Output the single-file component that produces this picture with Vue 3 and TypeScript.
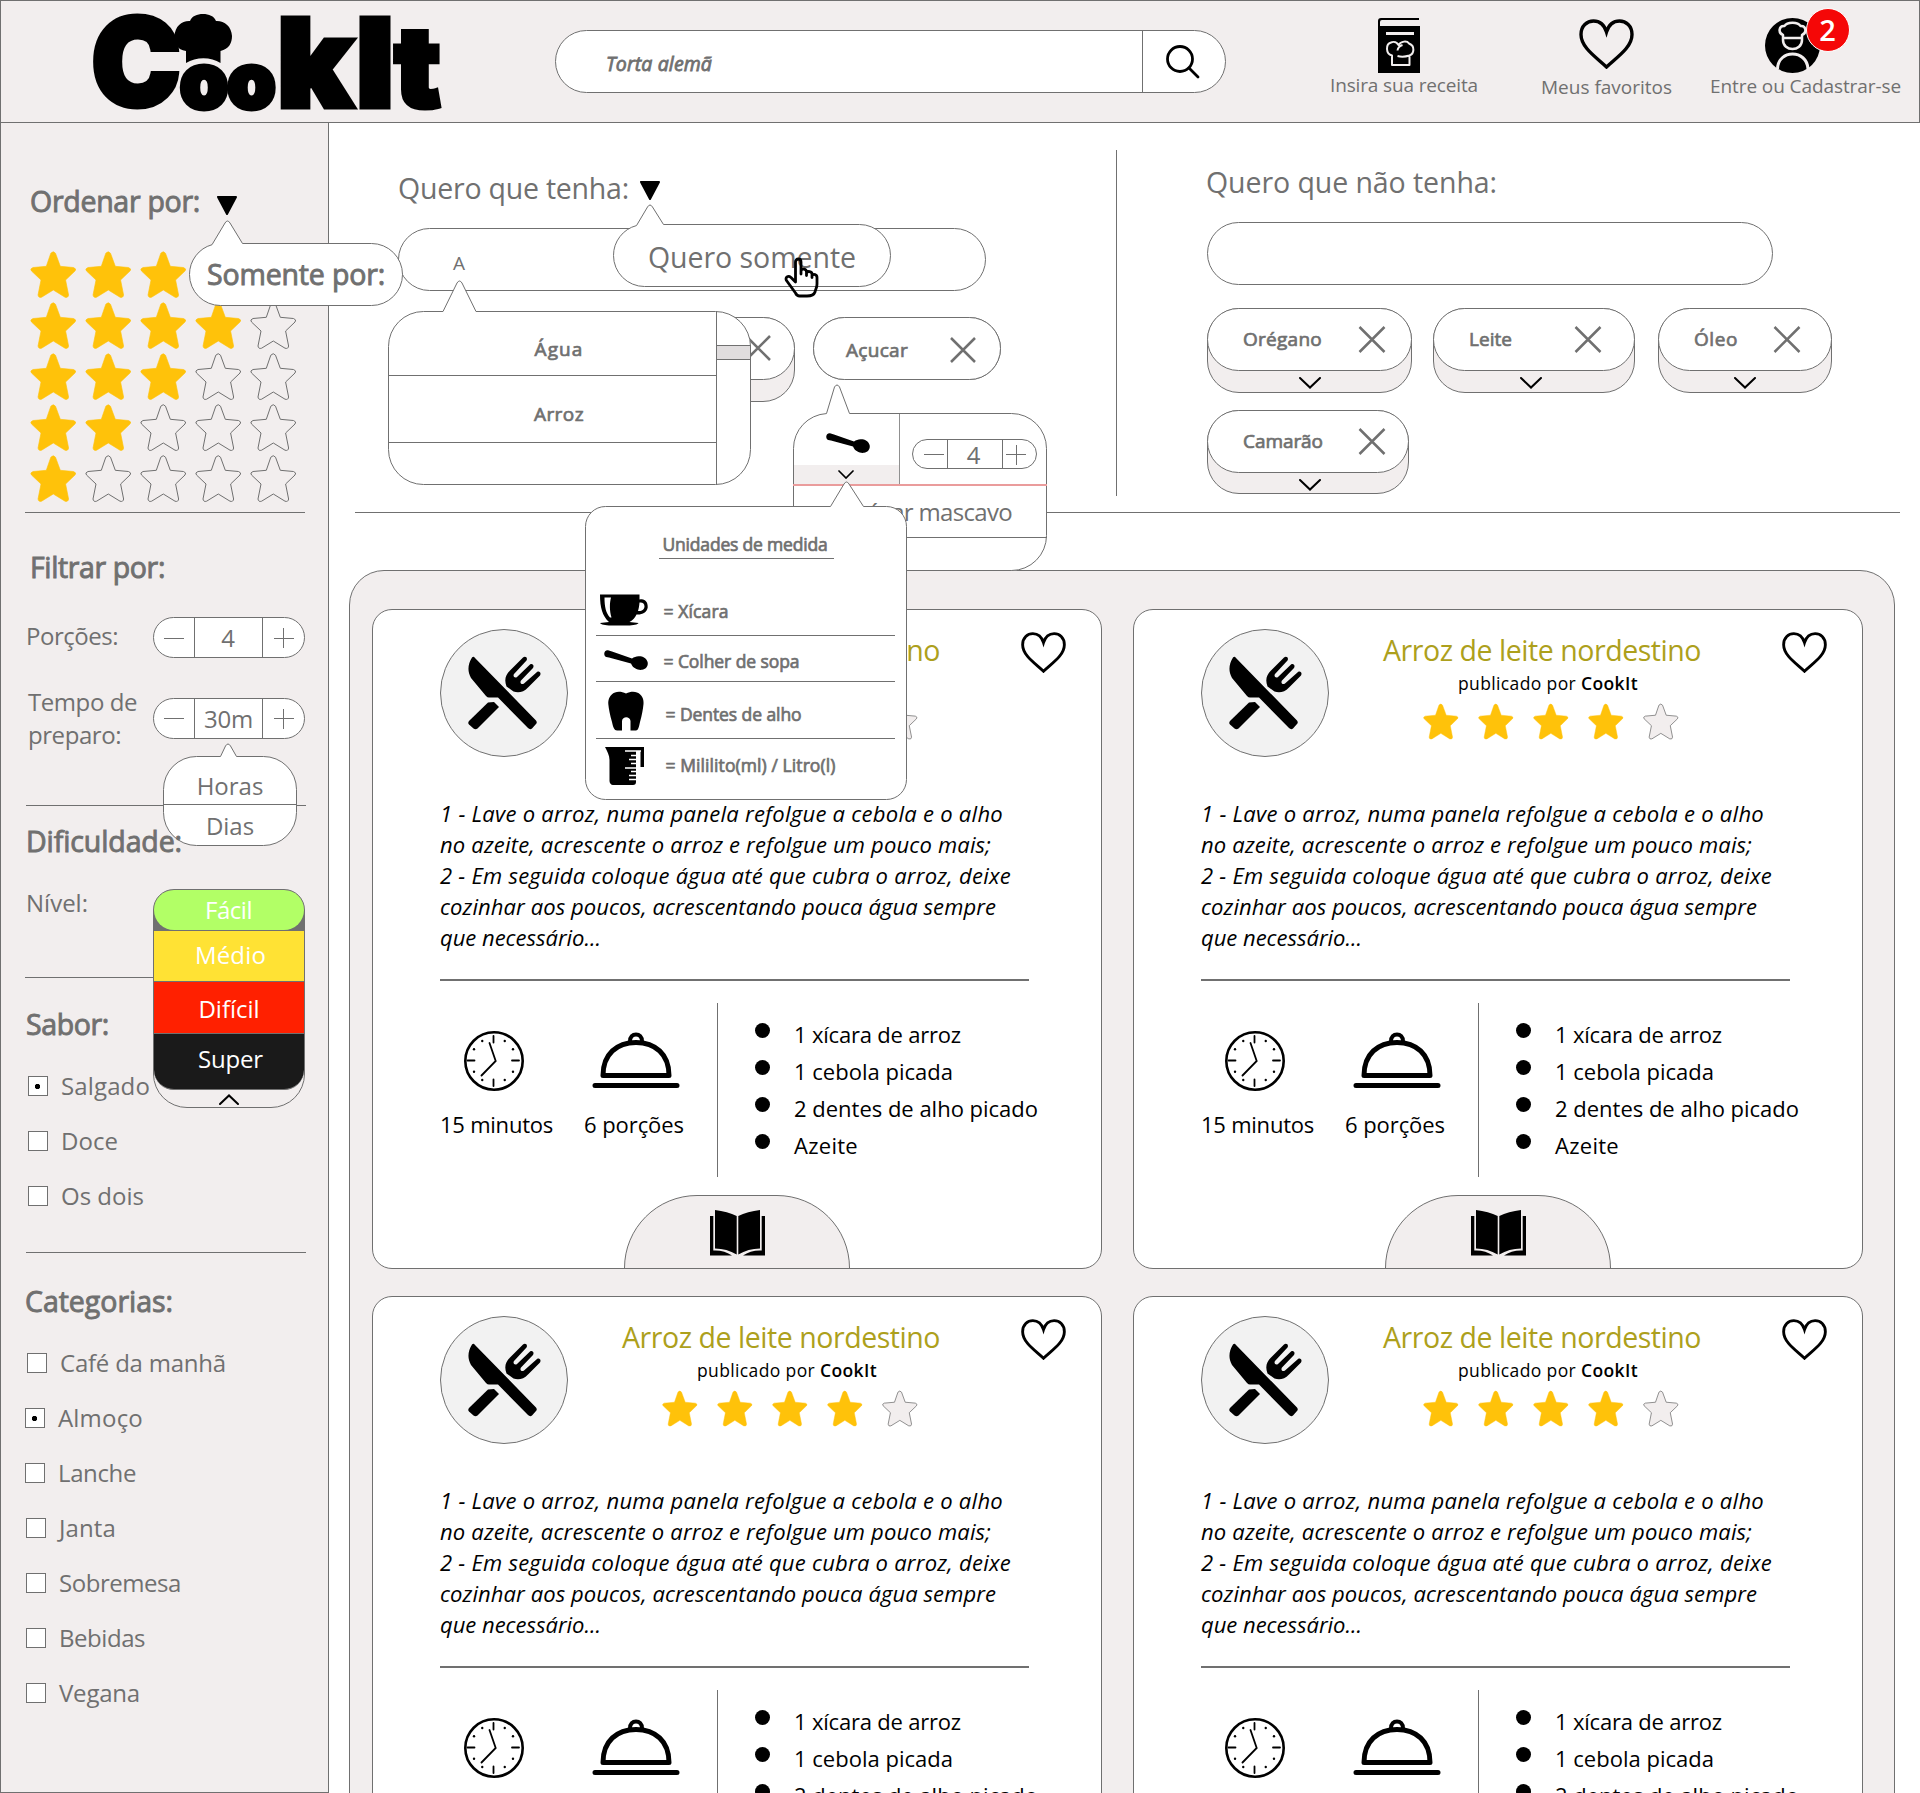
<script setup lang="ts">
interface BubbleSpec { w: number; h: number; r: number; tail: number; tip: number; left: number; right: number }
interface Option { label: string; width: number; checked?: boolean; shift?: number }
interface Chip { label: string; width: number; text: number; height: number; cross: number; chevron: number }

// Tracks a label so that it takes exactly the given width.
const vFit = {
  mounted(el: HTMLElement, binding: { value: number }) {
    const natural = el.getBoundingClientRect().width
    const count = (el.textContent ?? '').trim().length || 1
    el.style.letterSpacing = `${((binding.value - natural) / count).toFixed(3)}px`
  },
}

// Rounded speech bubble with a tail on its top edge.
function bubble(b: BubbleSpec): string {
  const { w, h, r, tail, tip, left, right } = b
  const drop = left < r ? r - Math.sqrt(r * r - (r - left) ** 2) : 0
  const close = left < r ? `A${r} ${r} 0 0 1 ${left} ${tail + drop}` : `A${r} ${r} 0 0 1 ${r} ${tail}H${left}`
  return `M${left} ${tail + drop}L${tip - 2.5} 2.5Q${tip} -1.5 ${tip + 2.5} 2.5L${right} ${tail}H${w - r}` +
    `A${r} ${r} 0 0 1 ${w} ${tail + r}V${tail + h - r}A${r} ${r} 0 0 1 ${w - r} ${tail + h}` +
    `H${r}A${r} ${r} 0 0 1 0 ${tail + h - r}V${tail + r}${close}Z`
}

const shapes = {
  only: bubble({ w: 213, h: 62, r: 31, tail: 23, tip: 38, left: 22.5, right: 53 }),
  time: bubble({ w: 133, h: 89, r: 33, tail: 13, tip: 64.5, left: 57, right: 73 }),
  want: bubble({ w: 277, h: 62, r: 31, tail: 20, tip: 36.5, left: 23, right: 50 }),
  auto: bubble({ w: 362, h: 173, r: 35, tail: 31, tip: 71, left: 54.5, right: 87.5 }),
  unit: bubble({ w: 253, h: 157, r: 35, tail: 29, tip: 43.5, left: 33, right: 56 }),
  measure: bubble({ w: 321, h: 293, r: 20, tail: 25, tip: 261, left: 245, right: 278 }),
}

const starPath = 'M20.8 2.2Q23.3-.8 25.5 2.2L30.3 15.3L43.5 16.5Q47 17.8 45 20L35.6 29L38.6 44Q38.2 47.2 35 46.2L23.3 39L11.6 46.2Q8.4 47.2 8 44L11 29L1.5 20Q-.5 17.8 3 16.5L16.3 15.3Z'
const heartPath = 'M27.5 48C17 38 2 28.500 2 15.500C2 7 8 2 14.500 2C21 2 25.500 6.500 27.500 13C29.500 6.500 34 2 40.500 2C47 2 53 7 53 15.500C53 28.500 38 38 27.500 48Z'
const spoonPath = 'M4 .3C1 0-.5 3 .6 5.500C1.200 7 3 7.200 5 7.600L27 13.500C29 18.500 34 20.300 38 19.800C42 19.300 44.500 15.500 43.600 12C42.500 8 38.500 6 34.500 6.200C32 6.500 30 7 28 8.500L8 1.400Z'

const ratings = [5, 4, 3, 2, 1]
const levels = [
  { label: 'Fácil', cls: 'easy', width: 47 },
  { label: 'Médio', cls: 'medium', width: 71 },
  { label: 'Difícil', cls: 'hard', width: 61 },
  { label: 'Super', cls: 'super', width: 65 },
]
const flavours: Option[] = [
  { label: 'Salgado', width: 89, checked: true },
  { label: 'Doce', width: 57 },
  { label: 'Os dois', width: 83 },
]
const categories: Option[] = [
  { label: 'Café da manhã', width: 166, shift: 2 },
  { label: 'Almoço', width: 85, checked: true },
  { label: 'Lanche', width: 78 },
  { label: 'Janta', width: 57, shift: 1 },
  { label: 'Sobremesa', width: 122, shift: 1 },
  { label: 'Bebidas', width: 86, shift: 1 },
  { label: 'Vegana', width: 81, shift: 1 },
]
const excluded: Chip[] = [
  { label: 'Orégano', width: 205, text: 79, height: 85, cross: 25, chevron: 0 },
  { label: 'Leite', width: 202, text: 43, height: 85, cross: 32, chevron: -6 },
  { label: 'Óleo', width: 174, text: 44, height: 85, cross: 30, chevron: 0 },
  { label: 'Camarão', width: 202, text: 80, height: 84, cross: 22, chevron: 4 },
]
const steps = [
  { text: '1 - Lave o arroz, numa panela refolgue a cebola e o alho', width: 563 },
  { text: 'no azeite, acrescente o arroz e refolgue um pouco mais;', width: 551 },
  { text: '2 - Em seguida coloque água até que cubra o arroz, deixe', width: 571 },
  { text: 'cozinhar aos poucos, acrescentando pouca água sempre', width: 556 },
  { text: 'que necessário...', width: 161 },
]
const ingredients = [
  { text: '1 xícara de arroz', width: 167 },
  { text: '1 cebola picada', width: 159 },
  { text: '2 dentes de alho picado', width: 244 },
  { text: 'Azeite', width: 64 },
]
const clockDots = [30, 60, 120, 150, 210, 240, 300, 330].map((deg) => ({
  x: 29.5 + 22.5 * Math.sin((deg * Math.PI) / 180),
  y: 29.5 - 22.5 * Math.cos((deg * Math.PI) / 180),
}))
</script>

<template>
  <div class="page">
    <header class="header">
      <svg class="logo" width="350" height="100" viewBox="0 0 350 100" role="img" aria-label="CookIt">
        <g class="logo-text">
          <text x="-1.500" y="93" font-size="122" textLength="89" lengthAdjust="spacingAndGlyphs">C</text>
          <text x="87" y="94.500" font-size="76" textLength="48" lengthAdjust="spacingAndGlyphs">o</text>
          <text x="134.500" y="94.500" font-size="76" textLength="48" lengthAdjust="spacingAndGlyphs">o</text>
          <text x="184" y="94" font-size="123" textLength="76" lengthAdjust="spacingAndGlyphs">k</text>
          <text x="263" y="94" font-size="123" textLength="38" lengthAdjust="spacingAndGlyphs">I</text>
          <text x="301.500" y="94" font-size="111" textLength="46" lengthAdjust="spacingAndGlyphs">t</text>
        </g>
        <path d="M93 50V38C84 37 81.500 30 81.500 23C82 13 89 7.500 97 8C99 3 104 1 110 1C116 1 121 3 123 8C131 7.500 138.500 13 139 23C139 30 136 36 127.500 38V50C118 43.500 103 43.500 93 50Z" />
      </svg>
      <div class="search">
        <span v-fit="106" class="search-text">Torta alemã</span>
        <span class="search-button">
          <svg width="34" height="34" viewBox="0 0 34 34" fill="none" stroke="#000" stroke-width="2.800" stroke-linecap="round"><circle cx="14" cy="14" r="12.500" /><path d="M23.500 23.500L32 32" /></svg>
        </span>
      </div>
      <nav class="nav">
        <a class="nav-item recipe">
          <svg width="42" height="55" viewBox="0 0 42 55" fill="none">
            <path d="M0 55V3Q0 0 3 0H41V2H4Q2 2 2 4V8H42V55Z" fill="#000" />
            <g stroke="#f2eeee" stroke-width="2" stroke-linejoin="round"><path d="M8 15.500H36" stroke-width="3" /><path d="M14 47V37.500C7.500 36 7.500 26 13 24.500C16 23 19 24.500 20.500 27C23 23 29 22.500 31 25.500C37.500 28 36 36 31.500 37.500V47ZM19.500 32.500Q20 28.500 24.500 27M19.500 38Q25 39.500 31.500 37.500" /></g>
          </svg>
          <span v-fit="148">Insira sua receita</span>
        </a>
        <a class="nav-item favourites">
          <svg width="55" height="50" viewBox="0 0 55 50" fill="none" stroke="#000" stroke-width="3.400"><path :d="heartPath" /></svg>
          <span v-fit="131">Meus favoritos</span>
        </a>
        <a class="nav-item account">
          <span class="avatar">
            <svg width="55" height="55" viewBox="0 0 55 55" fill="none"><circle cx="27.500" cy="27.500" r="27.500" fill="#000" /><g stroke="#f2eeee" stroke-width="2.500" stroke-linejoin="round"><path d="M18 20V17C13 15 13.500 7.500 19.500 8C22 3.500 33 3.500 35.500 8C41.500 7.500 42 15 37 17V20ZM18 20V22C18 34 37 34 37 22V20" /><path d="M12.500 51C13 31 42 31 43 51" stroke-width="3" /></g></svg>
            <b class="badge">2</b>
          </span>
          <span v-fit="191">Entre ou Cadastrar-se</span>
        </a>
      </nav>
    </header>

    <div class="body">
      <aside class="sidebar">
        <div class="heading order-heading">
          <span v-fit="170">Ordenar por:</span>
          <svg class="caret" width="22" height="20" viewBox="0 0 22 20"><path d="M2 1H20L11 18Z" stroke="#000" stroke-width="2" stroke-linejoin="round" /></svg>
          <div class="bubble only-bubble">
            <svg class="shape"><path :d="shapes.only" /></svg>
            <span v-fit="178">Somente por:</span>
          </div>
        </div>
        <div class="rating-grid">
          <template v-for="row in ratings" :key="row">
            <svg v-for="n in 5" :key="n" width="47" height="47" viewBox="0 0 47 47" :class="n <= row ? 'star-on' : 'star-off'"><path :d="starPath" /></svg>
          </template>
        </div>
        <hr class="rule order-rule" />

        <div class="heading filter-heading"><span v-fit="135">Filtrar por:</span></div>
        <div class="field portions">
          <span class="field-label"><span v-fit="92">Porções:</span></span>
          <div class="stepper"><i class="minus"></i><b>4</b><i class="plus"></i></div>
        </div>
        <div class="field time">
          <span class="field-label"><span v-fit="109">Tempo de</span><br /><span v-fit="93">preparo:</span></span>
          <div class="stepper">
            <i class="minus"></i><b>30m</b><i class="plus"></i>
            <div class="bubble time-bubble">
              <svg class="shape"><path :d="shapes.time" /></svg>
              <span>Horas</span><span>Dias</span>
            </div>
          </div>
        </div>
        <hr class="rule time-rule" />

        <div class="heading level-heading"><span v-fit="156">Dificuldade:</span></div>
        <div class="field level">
          <span class="field-label"><span v-fit="62">Nível:</span></span>
          <div class="levels">
            <div v-for="l in levels" :key="l.label" :class="['level-item', l.cls]"><span v-fit="l.width">{{ l.label }}</span></div>
            <svg width="20" height="11" viewBox="0 0 20 11" fill="none" stroke="#000" stroke-width="2" stroke-linecap="round"><path d="M1 10L10 1.500L19 10" /></svg>
          </div>
        </div>
        <hr class="rule level-rule" />

        <div class="heading flavour-heading"><span v-fit="83">Sabor:</span></div>
        <div class="options flavours">
          <label v-for="o in flavours" :key="o.label" class="option"><i :class="['box', { checked: o.checked }]"></i><span v-fit="o.width">{{ o.label }}</span></label>
        </div>
        <hr class="rule flavour-rule" />

        <div class="heading category-heading"><span v-fit="148">Categorias:</span></div>
        <div class="options categories">
          <label v-for="o in categories" :key="o.label" class="option" :style="{ marginLeft: (o.shift ?? 0) + 'px' }"><i :class="['box', { checked: o.checked }]"></i><span v-fit="o.width">{{ o.label }}</span></label>
        </div>
      </aside>

      <main class="main">
        <section class="filters">
          <div class="want">
            <div class="title">
              <span v-fit="231">Quero que tenha:</span>
              <svg width="22" height="20" viewBox="0 0 22 20"><path d="M2 1H20L11 18Z" stroke="#000" stroke-width="2" stroke-linejoin="round" /></svg>
            </div>
            <div class="input want-input">A</div>
            <div class="chips want-chips">
              <div class="chip hidden-chip"><div class="chip-face"><svg class="cross" width="26" height="26" viewBox="0 0 26 26"><path d="M1 1L25 25M25 1L1 25" /></svg></div></div>
              <div class="chip sugar-chip"><div class="chip-face"><span v-fit="62">Açucar</span><svg class="cross" width="26" height="26" viewBox="0 0 26 26"><path d="M1 1L25 25M25 1L1 25" /></svg></div></div>
            </div>
          </div>
          <div class="separator"></div>
          <div class="avoid">
            <div class="title"><span v-fit="291">Quero que não tenha:</span></div>
            <div class="input avoid-input"></div>
            <div class="chips avoid-chips">
              <div v-for="c in excluded" :key="c.label" class="chip" :style="{ width: c.width + 'px', height: c.height + 'px' }">
                <div class="chip-face" :style="{ paddingRight: c.cross + 'px' }">
                  <span v-fit="c.text">{{ c.label }}</span>
                  <svg class="cross" width="28" height="27" viewBox="0 0 28 27"><path d="M1.500 1L26.500 26M26.500 1L1.500 26" /></svg>
                </div>
                <div class="chip-foot" :style="{ paddingLeft: Math.max(c.chevron, 0) + 'px', paddingRight: Math.max(-c.chevron, 0) + 'px' }">
                  <svg width="22" height="12" viewBox="0 0 22 12" fill="none" stroke="#000" stroke-width="2" stroke-linecap="round"><path d="M1 1L11 10.500L21 1" /></svg>
                </div>
              </div>
            </div>
          </div>

          <div class="bubble want-bubble">
            <svg class="shape"><path :d="shapes.want" /></svg>
            <span v-fit="208">Quero somente</span>
            <svg class="hand" width="35" height="41" viewBox="0 0 35 41" fill="none" stroke="#000" stroke-width="2.800" stroke-linejoin="round" stroke-linecap="round"><path d="M11.500 25V5C11.500 1 17 1 17 5V17V13.500C18 11 22.500 12 22.500 15V18.500V16C23.500 13.500 28 14.500 28 17V20.500V18.500C29.500 16.500 33 17.500 33 20.500V27C33 31 31.500 32 31 35C30 38 27 39 23 39H15.500C13 39 12.500 38 11.500 36L2.500 23.500C1 20.500 4 18 7 20.500Z" /></svg>
          </div>

          <div class="bubble auto-bubble">
            <svg class="shape"><path :d="shapes.auto" /></svg>
            <div class="auto-list"><span><em v-fit="49">Água</em></span><span><em v-fit="50">Arroz</em></span></div>
            <div class="auto-scroll"><i></i></div>
          </div>

          <div class="bubble unit-bubble">
            <svg class="shape"><path :d="shapes.unit" /></svg>
            <div class="unit-top">
              <div class="unit-pick">
                <svg width="44" height="20" viewBox="0 0 44 20"><path :d="spoonPath" /></svg>
                <div class="unit-open"><svg width="16" height="9" viewBox="0 0 16 9" fill="none" stroke="#000" stroke-width="1.700" stroke-linecap="round"><path d="M1 1L8 8L15 1" /></svg></div>
              </div>
              <div class="stepper small"><i class="minus"></i><b>4</b><i class="plus"></i></div>
            </div>
            <div class="unit-name"><span v-fit="171">Açúcar mascavo</span></div>
          </div>

          <div class="bubble measure-bubble">
            <svg class="shape"><path :d="shapes.measure" /></svg>
            <div class="measure-title"><span v-fit="165">Unidades de medida</span></div>
            <div class="measure-row cup">
              <svg width="48" height="32" viewBox="0 0 48 32"><path fill-rule="evenodd" d="M0 .5H39.500V5.500C45 4 48 8 47.700 13.500C47 18.500 42 21 36.500 20.500C35 24 33 26 29.500 28L38.500 29C38 30.500 33 31.500 28 31.500H11C5 31.500 1 30.500 0 29L9 28C2.500 22 0 14 0 .5ZM4.500 3.500C4.500 13 6 19 10 23.500H11.500C9.500 17 9.500 9 11 3.500ZM39.500 8.500C39.300 11.500 38.800 14.500 38 17C42 17.500 44.500 15 44.500 12.500C44.500 9.500 42.500 8 39.500 8.500Z" /></svg>
              <span v-fit="65">= Xícara</span>
            </div>
            <div class="measure-row spoon">
              <svg width="44" height="20" viewBox="0 0 44 20"><path :d="spoonPath" /></svg>
              <span v-fit="136">= Colher de sopa</span>
            </div>
            <div class="measure-row tooth">
              <svg width="36" height="40" viewBox="0 0 36 40"><path d="M18 2.500C22 .5 26 0 29 1.500C34 3.500 36 8 35.500 13C35 18 34 24 32 31C31 36 30 39.500 28 39.500H22.500V30C22 25 14.500 25 14 30V39.500H9C6.500 39.500 5 36 4 31C2 24 .8 18 .3 13C0 8 2 3.500 7 1.500C10 0 14 .5 18 2.500Z" /></svg>
              <span v-fit="136">= Dentes de alho</span>
            </div>
            <div class="measure-row jug">
              <svg width="39" height="38" viewBox="0 0 39 38"><path d="M0 0H39V20H35.500V4H31V35C31 37 30 38 28 38H8C6 38 4.500 36 4.500 34V13C4.500 8 2 4 0 0Z" /><path d="M20 4H36M26 8.500H32M24 12.500H32M26 16.500H32M20 21H32M26 24.500H32M24 28.500H32M24 32.500H32" stroke="#fff" stroke-width="1.300" /></svg>
              <span v-fit="170">= Mililito(ml) / Litro(l)</span>
            </div>
          </div>
        </section>
        <hr class="rule main-rule" />

        <section class="panel">
          <article v-for="card in 4" :key="card" class="card">
            <div class="card-head">
              <div class="avatar-circle">
                <svg width="73" height="74" viewBox="0 0 73 74"><path d="M4 1.500Q5.500 0 7 2L68 64.500Q69.500 66.500 68 68L64 72.500Q62 74 60 72L30 41.500L21 41.500Q19.500 41.500 18 40L3 22C-1 15 0 8 4 1.500Z" /><path d="M20 46.500L26 46L31 51L9.500 72.500Q7.500 74 5.500 72.500L1 68.500Q-.5 67 1 65Z" /><path d="M38.500 30.500C36 24 37.500 19 42 14.500L55 1.500C57.500-.3 60 2 58.500 4.500L46 18C44.500 20.500 47 22.500 49 21L62 8.500C64.500 7 66.500 9.500 65 12L53 24.500C51.500 27 53.500 29 56 27.500L69 16C71.500 14.500 73.500 17 72 19.500L60 31.500C55.500 36.500 50 37 45.500 35.500Z" /></svg>
              </div>
              <div class="card-info">
                <h2 class="card-title"><span v-fit="318">Arroz de leite nordestino</span></h2>
                <p class="author"><span v-fit="180">publicado por <b>CookIt</b></span></p>
                <div class="stars">
                  <svg v-for="n in 5" :key="n" width="36" height="37" viewBox="0 0 47 47" :class="n <= 4 ? 'star-on' : 'star-off filled'"><path :d="starPath" /></svg>
                </div>
              </div>
              <svg class="card-heart" width="45" height="41" viewBox="0 0 55 50" fill="none" stroke="#000" stroke-width="3.500"><path :d="heartPath" /></svg>
            </div>
            <div class="steps">
              <p v-for="s in steps" :key="s.text"><span v-fit="s.width">{{ s.text }}</span></p>
            </div>
            <div class="card-details">
              <div class="fact fact-time">
                <svg width="60" height="60" viewBox="0 0 60 60" fill="none" stroke="#000"><circle cx="30" cy="30" r="28.700" stroke-width="2.600" /><path d="M29.500 5V11.500M29.500 48.500V55M3.500 29.500H10.500M48 29.500H55M25.500 12L31.700 30L17.500 44.500" stroke-width="1.800" stroke-linecap="round" /><circle v-for="(d, i) in clockDots" :key="i" :cx="d.x" :cy="d.y" r="1.200" fill="#000" stroke="none" /></svg>
                <span v-fit="113">15 minutos</span>
              </div>
              <div class="fact fact-portions">
                <svg width="88" height="57" viewBox="0 0 88 57" fill="none" stroke="#000" stroke-width="5" stroke-linecap="round" stroke-linejoin="round"><path d="M11 43.500C11 22 25 10.500 44 10.500C63 10.500 77 22 77 43.500ZM3 53.500H85" /><path d="M38 9.500C37.500 0 50.500 0 50 9.500" stroke-width="4" /></svg>
                <span v-fit="100">6 porções</span>
              </div>
              <ul class="ingredients">
                <li v-for="i in ingredients" :key="i.text"><i></i><span v-fit="i.width">{{ i.text }}</span></li>
              </ul>
            </div>
            <div class="card-tab">
              <svg width="55" height="46" viewBox="0 0 55 46"><path d="M5 0C13 1 21 3 26.700 6V44.500C20 40.500 13 38.700 5 38.500ZM50 0C42 1 34 3 28.300 6V44.500C35 40.500 42 38.700 50 38.500ZM0 6H3.300V40.500C10 40 17 42 22 45.500H0ZM55 6H51.700V40.500C45 40 38 42 33 45.500H55Z" /></svg>
            </div>
          </article>
        </section>
      </main>
    </div>
  </div>
</template>

<style>
body { margin: 0; background: #fff; }
</style>

<style scoped>
* { box-sizing: border-box; }
.page { width: 1920px; height: 1793px; overflow: hidden; background: #fff; color: #707070; font: 24px/30px "Open Sans", "Noto Sans", sans-serif; }
span, b, em { white-space: nowrap; }
svg { display: block; flex: none; }
i, em { font-style: normal; }

.header { display: flex; height: 123px; border: 1px solid #707070; background: #f2eeee; }
.logo { margin: 12px 0 0 92px; overflow: visible; }
.logo-text { font-family: "Inter", "Open Sans", sans-serif; font-weight: 900; fill: #000; stroke: #000; stroke-width: 5; }
.search { display: flex; width: 671px; height: 63px; margin: 29px 0 0 112px; border: 1px solid #707070; border-radius: 32px; background: #fff; overflow: hidden; }
.search-text { display: inline-block; margin-left: 50px; font-size: 19.500px; font-style: italic; line-height: 65px; -webkit-text-stroke: .8px #707070; }
.search-button { display: flex; align-items: center; width: 83px; margin-left: auto; padding-left: 23px; border-left: 1px solid #707070; }
.nav { display: flex; margin-left: auto; padding-right: 18px; }
.nav-item { display: flex; flex-direction: column; align-items: center; padding-top: 17px; font-size: 19px; line-height: 24px; }
.nav-item > span { display: inline-block; }
.recipe { margin-right: 63px; }
.recipe > svg { margin-right: 10px; }
.favourites { margin-right: 38px; padding-top: 18px; }
.favourites > svg { margin-bottom: 6px; }
.account .avatar { position: relative; margin: 0 27px 1px 0; }
.badge { position: absolute; top: -10px; left: 41px; width: 44px; height: 44px; border: 1px solid #fff; border-radius: 50%; background: #f50707; color: #fff; font-size: 29px; font-weight: 600; line-height: 42px; text-align: center; }

.body { display: flex; height: 1670px; }
.sidebar { position: relative; z-index: 2; display: flex; flex-direction: column; width: 329px; border: solid #707070; border-width: 0 1px 1px; background: #f2eeee; }
.rule { flex: none; width: 280px; height: 1px; margin: 0; border: 0; background: #707070; }
.heading { position: relative; flex: none; display: flex; height: 40px; font-size: 28.500px; line-height: 40px; -webkit-text-stroke: .9px #707070; }
.heading span { display: inline-block; }
.bubble { position: absolute; }
.shape { position: absolute; top: 0; left: 0; width: 100%; height: 100%; overflow: visible; transform: translate(.5px, .5px); }
.shape path { fill: #fff; stroke: #707070; stroke-width: 1; }
.bubble > span, .bubble > div { position: relative; }

.order-heading { margin: 58px 0 0 29px; }
.caret { margin: 15px 0 0 16px; }
.only-bubble { top: 39px; left: 159px; width: 214px; height: 86px; padding: 23px 0 0 18px; z-index: 2; }
.only-bubble span { line-height: 63px; }
.rating-grid { display: grid; flex: none; grid-template-columns: repeat(5, 55px); grid-auto-rows: 51px; height: 251px; margin: 30px 0 0 28.500px; }
.star-on { fill: #ffc20a; stroke: #ffc20a; stroke-width: .6; overflow: visible; }
.star-off { fill: none; stroke: #707070; stroke-width: 1; overflow: visible; }
.star-off.filled { fill: #f2eeee; }
.order-rule { margin: 10px 0 0 24px; }

.filter-heading { margin: 34px 0 0 29px; }
.field { flex: none; display: flex; align-items: center; justify-content: space-between; width: 304px; padding-left: 25px; line-height: 33px; }
.field-label span { display: inline-block; }
.field > .field-label { padding-bottom: 5px; }
.portions { margin-top: 30px; height: 41px; }
.time { margin-top: 27px; height: 66px; }
.time > .field-label { padding: 0 0 0 2px; }
.stepper { position: relative; display: grid; grid-template-columns: 40px 69px 41px; width: 152px; height: 41px; border: 1px solid #707070; border-radius: 21px; background: #fff; text-align: center; }
.stepper b { border: solid #707070; border-width: 0 1px; font-weight: 400; line-height: 40px; letter-spacing: -.2px; }
.portions b { padding-right: 1px; }
.minus, .plus { background: linear-gradient(#707070, #707070) center / 20px 1px no-repeat; }
.plus { background: linear-gradient(#707070, #707070) center / 20px 1px no-repeat, linear-gradient(#707070, #707070) center / 1px 20px no-repeat; }
.time-bubble { top: 44px; left: 9px; display: flex; flex-direction: column; align-items: center; width: 134px; height: 103px; padding-top: 13px; }
.time-bubble span { width: 100%; height: 41px; line-height: 42px; }
.time-bubble span:nth-of-type(1) { height: 49px; padding-top: 9px; border-bottom: 1px solid #707070; }
.time-rule { margin: 54px 0 0 25px; }

.level-heading { z-index: 3; margin: 15px 0 0 25px; }
.level { align-items: flex-start; height: 41px; margin-top: 28px; }
.level > .field-label { padding: 0; line-height: 27px; }
.levels { position: relative; z-index: 2; display: flex; flex-direction: column; align-items: center; width: 152px; height: 219px; flex: none; border: 1px solid #707070; border-radius: 21px 21px 34px 34px; background: linear-gradient(#707070 60px, #f2eeee 60px); color: #fff; }
.level-item { flex: none; width: 150px; text-align: center; border-bottom: 1px solid #707070; }
.level-item span { display: inline-block; }
.easy { height: 40px; padding-right: 1px; border-radius: 20px; border: 0; background: #b2ff66; line-height: 40px; }
.medium { height: 52px; padding-left: 3px; border-top: 1px solid #707070; background: #ffe234; line-height: 47px; }
.hard { height: 52px; background: #ff2000; line-height: 54px; }
.super { height: 56px; padding-left: 3px; border-radius: 0 0 20px 20px; background: #1a1a1a; line-height: 50px; }
.levels svg { margin-top: 4px; }
.level-rule { margin: 47px 0 0 24px; }

.flavour-heading { margin: 26px 0 0 25px; }
.options { flex: none; display: flex; flex-direction: column; gap: 35px; }
.flavours { margin: 32px 0 0 27px; }
.categories { margin: 32px 0 0 24px; }
.option { display: flex; gap: 13px; height: 20px; line-height: 20px; }
.option span { display: inline-block; }
.box { width: 20px; height: 20px; border: 1px solid #707070; background: #fff; }
.box.checked { background: radial-gradient(circle at 8.500px 9.500px, #000 2.300px, #fff 3px); }
.flavour-rule { margin: 46px 0 0 25px; }
.category-heading { margin: 28px 0 0 24px; }

.main { width: 1591px; flex: none; }
.filters { position: relative; z-index: 1; display: flex; height: 389px; }
.title { display: flex; height: 40px; font-size: 28.500px; line-height: 40px; }
.title span { display: inline-block; }
.want { width: 787px; padding: 45px 0 0 69px; }
.want .title svg { margin: 13px 0 0 10px; }
.input { height: 63px; border: 1px solid #707070; border-radius: 32px; background: #fff; }
.want-input { width: 588px; margin-top: 20px; padding-left: 54px; font-size: 19px; line-height: 69px; }
.chips { display: flex; }
.want-chips { margin: 26px 0 0 199px; }
.chip { position: relative; flex: none; border: 1px solid #707070; border-radius: 32px; background: #f2eeee; }
.chip-face { display: flex; align-items: center; justify-content: space-between; height: 63px; margin: -1px; padding: 0 25px 1px 35px; border: 1px solid #707070; border-radius: 32px; background: #fff; font-size: 19px; -webkit-text-stroke: .7px #707070; }
.cross { fill: none; stroke: #707070; stroke-width: 2.500; }
.chip-foot { display: flex; justify-content: center; padding-top: 7px; }
.hidden-chip { width: 198px; height: 85px; margin-right: 18px; }
.hidden-chip .chip-face { justify-content: flex-end; padding-right: 23px; }
.sugar-chip { width: 188px; height: 63px; }
.sugar-chip .chip-face { padding: 2px 24px 0 32px; }
.separator { width: 1px; height: 346px; margin-top: 27px; background: #707070; }
.avoid { padding: 39px 0 0 90px; }
.avoid .title { margin-left: -1px; }
.avoid-input { width: 566px; margin-top: 20px; }
.avoid-chips { flex-wrap: wrap; gap: 17px 21px; width: 640px; margin-top: 23px; }
.avoid-chips .chip:nth-child(3) { margin-left: 2px; }

.want-bubble { top: 81px; left: 284px; width: 278px; height: 83px; padding: 20px 0 0 35px; font-size: 28.500px; line-height: 67px; z-index: 3; }
.want-bubble span { display: inline-block; }
.hand { position: absolute; top: 53px; left: 171px; }
.auto-bubble { top: 157px; left: 59px; display: flex; width: 363px; height: 205px; padding-top: 31px; z-index: 2; }
.auto-list { width: 328px; font-size: 19px; text-align: center; -webkit-text-stroke: .7px #707070; }
.auto-list span { display: block; height: 67px; border-bottom: 1px solid #707070; line-height: 77px; padding-left: 14px; }
.auto-list span:first-child { height: 65px; }
.auto-list em { display: inline-block; }
.auto-scroll { width: 35px; border-left: 1px solid #707070; }
.auto-scroll i { display: block; height: 15px; margin-top: 34px; border: 1px solid #707070; border-left: 0; background: #e0ddde; }
.unit-bubble { top: 261px; left: 464px; width: 254px; height: 187px; padding-top: 30px; z-index: 1; }
.unit-top { display: flex; height: 72px; border-bottom: 2px solid #ea9c9c; }
.unit-pick { width: 107px; border-right: 1px solid #909090; }
.unit-pick > svg { margin: 19px 0 12px 33px; }
.unit-open { height: 19px; margin-left: 1px; padding: 5px 0 0 44px; background: #f2eeee; }
.small { grid-template-columns: 34px 56px 33px; width: 125px; height: 30px; margin: 25px 0 0 12px; }
.small .minus { margin: 0 0 0 8px; }
.small .plus { margin: 0 7px 0 0; }
.small b { padding-right: 3px; line-height: 29px; }
.unit-name { height: 52px; padding-right: 35px; border-bottom: 1px solid #707070; line-height: 52px; text-align: right; }
.unit-name span { display: inline-block; }
.measure-bubble { top: 358px; left: 255.500px; width: 322px; height: 319px; padding: 25px 12px 0 11px; z-index: 4; font-size: 17.500px; -webkit-text-stroke: .7px #707070; }
.measure-title { width: 175px; height: 53px; margin: 0 0 31px 63px; padding-left: 4px; border-bottom: 1px solid #707070; line-height: 76px; }
.measure-title span { display: inline-block; }
.measure-row { display: flex; align-items: center; height: 46px; border-bottom: 1px solid #707070; }
.measure-row svg { -webkit-text-stroke: 0; }
.measure-row span { position: relative; display: inline-block; }
.cup svg { margin: 0 16px 6px 4px; }
.cup span { padding-bottom: 4px; }
.spoon svg { margin: 3px 16px 0 8px; }
.spoon span { padding-top: 5px; }
.tooth { height: 57px; }
.tooth svg { margin: 1px 22px 0 12px; }
.tooth span { padding-top: 7px; }
.jug { height: 54px; border: 0; }
.jug svg { margin: 0 22px 0 9px; }
.jug span { padding-bottom: 2px; }
.main-rule { width: 1545px; margin-left: 26px; }

.panel { display: grid; grid-template-columns: 730px 730px; grid-auto-rows: 660px; gap: 27px 31px; width: 1546px; height: 1250px; margin: 57px 0 0 20px; padding: 38px 22px; border: 1px solid #707070; border-radius: 35px 35px 0 0; background: #f2eeee; }
.card { position: relative; display: flex; flex-direction: column; border: 1px solid #707070; border-radius: 20px; background: #fff; color: #000; overflow: hidden; }
.card-head { display: flex; height: 180px; padding: 19px 35px 0 67px; }
.avatar-circle { display: flex; align-items: center; justify-content: center; flex: none; width: 128px; height: 128px; border: 1px solid #707070; border-radius: 50%; background: #f2f2f2; }
.card-info { width: 318px; margin-left: 54px; }
.card-title { margin: 0; color: #ada01c; font-size: 28.500px; font-weight: 400; line-height: 42px; }
.card-title span, .author span, .steps span { display: inline-block; }
.author { margin: 0; padding: 0 0 0 75px; font-size: 17.500px; line-height: 25px; }
.author b { font-weight: 600; }
.stars { display: flex; gap: 19px; margin: 7px 0 0 40px; }
.card-heart { margin: 3px 0 0 auto; }
.steps { padding: 9px 0 0 67px; font-size: 22px; font-style: italic; line-height: 31px; height: 191px; }
.steps p { margin: 0; }
.card-details { display: flex; height: 216px; padding-top: 22px; position: relative; }
.card-details::before { content: ""; position: absolute; top: -1px; left: 67px; width: 589px; height: 2px; background: #707070; }
.fact { display: flex; flex-direction: column; align-items: center; justify-content: space-between; height: 108px; margin-top: 29px; font-size: 22px; line-height: 30px; }
.fact span, .ingredients span { display: inline-block; }
.fact-time { width: 113px; margin-left: 67px; }
.fact-time svg { margin-right: 6px; }
.fact-portions { width: 100px; margin-left: 31px; margin-right: 33px; }
.fact-portions svg { margin: 1px 0 0 3px; }
.ingredients { height: 174px; margin: 1px 0 0; padding: 13px 0 0 37px; border-left: 1.500px solid #707070; list-style: none; font-size: 22px; }
.ingredients li { display: flex; height: 37px; line-height: 37px; }
.ingredients i { width: 15px; height: 15px; margin: 7px 24px 0 0; border-radius: 50%; background: #000; }
.card-tab { display: flex; justify-content: center; flex: none; width: 226px; height: 74px; margin: auto 0 -1px 251px; padding-top: 14px; border: 1px solid #707070; border-radius: 73px 73px 0 0; background: #f2eeee; }
</style>
